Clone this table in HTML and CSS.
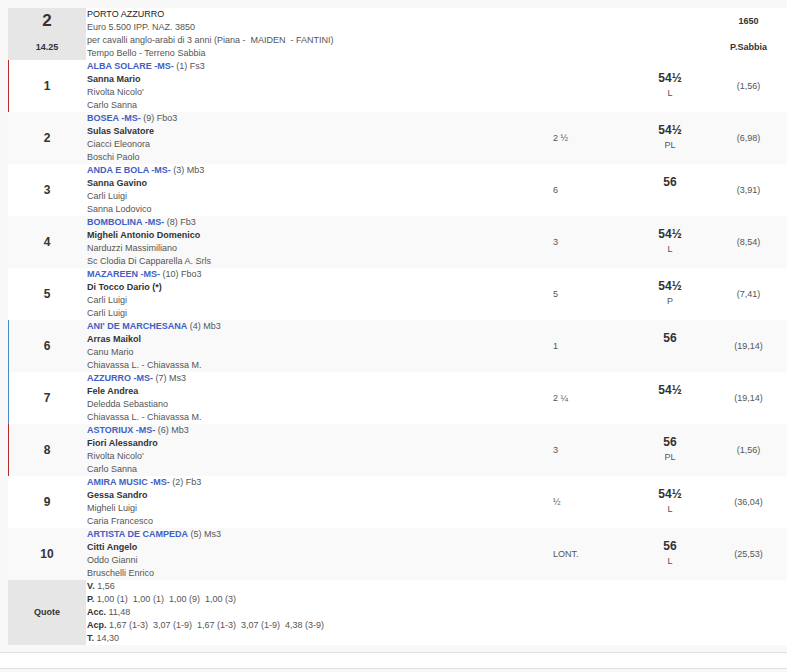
FILE: index.html
```html
<!DOCTYPE html>
<html>
<head>
<meta charset="utf-8">
<link rel="stylesheet" href="styles.css">
</head>
<body>
<div class="race">
  <div class="row head">
    <div class="num-cell gray">
      <div class="race-no">2</div>
      <div class="race-time">14.25</div>
    </div>
    <div class="info">
      <div class="title">PORTO AZZURRO</div>
      <div>Euro 5.500 IPP. NAZ. 3850</div>
      <div>per cavalli anglo-arabi di 3 anni (Piana -&nbsp; MAIDEN&nbsp; - FANTINI)</div>
      <div>Tempo Bello - Terreno Sabbia</div>
    </div>
    <div></div>
    <div></div>
    <div class="track">
      <div class="track-line">1650</div>
      <div class="track-line">P.Sabbia</div>
    </div>
  </div>

  <div class="row mark-red">
    <div class="pos">1</div>
    <div class="info"><div><span class="horse">ALBA SOLARE -MS-</span> (1) Fs3</div><div class="jockey">Sanna Mario</div><div>Rivolta Nicolo'</div><div>Carlo Sanna</div></div>
    <div class="dist"></div>
    <div class="weight"><div class="kg">54½</div><div class="wl">L</div></div>
    <div class="odds">(1,56)</div>
  </div>

  <div class="row alt">
    <div class="pos">2</div>
    <div class="info"><div><span class="horse">BOSEA -MS-</span> (9) Fbo3</div><div class="jockey">Sulas Salvatore</div><div>Ciacci Eleonora</div><div>Boschi Paolo</div></div>
    <div class="dist">2 ½</div>
    <div class="weight"><div class="kg">54½</div><div class="wl">PL</div></div>
    <div class="odds">(6,98)</div>
  </div>

  <div class="row">
    <div class="pos">3</div>
    <div class="info"><div><span class="horse">ANDA E BOLA -MS-</span> (3) Mb3</div><div class="jockey">Sanna Gavino</div><div>Carli Luigi</div><div>Sanna Lodovico</div></div>
    <div class="dist">6</div>
    <div class="weight"><div class="kg">56</div><div class="wl"></div></div>
    <div class="odds">(3,91)</div>
  </div>

  <div class="row alt">
    <div class="pos">4</div>
    <div class="info"><div><span class="horse">BOMBOLINA -MS-</span> (8) Fb3</div><div class="jockey">Migheli Antonio Domenico</div><div>Narduzzi Massimiliano</div><div>Sc Clodia Di Capparella A. Srls</div></div>
    <div class="dist">3</div>
    <div class="weight"><div class="kg">54½</div><div class="wl">L</div></div>
    <div class="odds">(8,54)</div>
  </div>

  <div class="row">
    <div class="pos">5</div>
    <div class="info"><div><span class="horse">MAZAREEN -MS-</span> (10) Fbo3</div><div class="jockey">Di Tocco Dario (*)</div><div>Carli Luigi</div><div>Carli Luigi</div></div>
    <div class="dist">5</div>
    <div class="weight"><div class="kg">54½</div><div class="wl">P</div></div>
    <div class="odds">(7,41)</div>
  </div>

  <div class="row alt mark-blue">
    <div class="pos">6</div>
    <div class="info"><div><span class="horse">ANI' DE MARCHESANA</span> (4) Mb3</div><div class="jockey">Arras Maikol</div><div>Canu Mario</div><div>Chiavassa L. - Chiavassa M.</div></div>
    <div class="dist">1</div>
    <div class="weight"><div class="kg">56</div><div class="wl"></div></div>
    <div class="odds">(19,14)</div>
  </div>

  <div class="row mark-blue">
    <div class="pos">7</div>
    <div class="info"><div><span class="horse">AZZURRO -MS-</span> (7) Ms3</div><div class="jockey">Fele Andrea</div><div>Deledda Sebastiano</div><div>Chiavassa L. - Chiavassa M.</div></div>
    <div class="dist">2 ¼</div>
    <div class="weight"><div class="kg">54½</div><div class="wl"></div></div>
    <div class="odds">(19,14)</div>
  </div>

  <div class="row alt mark-red">
    <div class="pos">8</div>
    <div class="info"><div><span class="horse">ASTORIUX -MS-</span> (6) Mb3</div><div class="jockey">Fiori Alessandro</div><div>Rivolta Nicolo'</div><div>Carlo Sanna</div></div>
    <div class="dist">3</div>
    <div class="weight"><div class="kg">56</div><div class="wl">PL</div></div>
    <div class="odds">(1,56)</div>
  </div>

  <div class="row">
    <div class="pos">9</div>
    <div class="info"><div><span class="horse">AMIRA MUSIC -MS-</span> (2) Fb3</div><div class="jockey">Gessa Sandro</div><div>Migheli Luigi</div><div>Caria Francesco</div></div>
    <div class="dist">½</div>
    <div class="weight"><div class="kg">54½</div><div class="wl">L</div></div>
    <div class="odds">(36,04)</div>
  </div>

  <div class="row alt">
    <div class="pos">10</div>
    <div class="info"><div><span class="horse">ARTISTA DE CAMPEDA</span> (5) Ms3</div><div class="jockey">Citti Angelo</div><div>Oddo Gianni</div><div>Bruschelli Enrico</div></div>
    <div class="dist">LONT.</div>
    <div class="weight"><div class="kg">56</div><div class="wl">L</div></div>
    <div class="odds">(25,53)</div>
  </div>

  <div class="row quote-row">
    <div class="quote-label gray">Quote</div>
    <div class="info">
      <div><b>V.</b> 1,56</div>
      <div><b>P.</b> 1,00 (1)&nbsp; 1,00 (1)&nbsp; 1,00 (9)&nbsp; 1,00 (3)</div>
      <div><b>Acc.</b> 11,48</div>
      <div><b>Acp.</b> 1,67 (1-3)&nbsp; 3,07 (1-9)&nbsp; 1,67 (1-3)&nbsp; 3,07 (1-9)&nbsp; 4,38 (3-9)</div>
      <div><b>T.</b> 14,30</div>
    </div>
    <div></div>
    <div></div>
    <div></div>
  </div>
</div>
<div class="spacer"></div>
<div class="footer-band"></div>
</body>
</html>
```

FILE: styles.css
```css
html, body {
  margin: 0;
  padding: 0;
}
body {
  background: #f8f8f8;
  padding: 8px 0 0 8px;
  font-family: "Liberation Sans", Arial, sans-serif;
  font-size: 9px;
  line-height: 13px;
  color: #555;
}
.race {
  background: #fff;
}
.row {
  display: grid;
  grid-template-columns: 78px 467px 77px 80px 77px;
  background: #fff;
}
.row.alt {
  background: #f9f9f9;
}
.mark-red {
  box-shadow: inset 1px 0 0 #b52a2a;
}
.mark-blue {
  box-shadow: inset 1px 0 0 #4a88cc;
}
.gray {
  background: #e6e6e6;
}
.num-cell {
  display: flex;
  flex-direction: column;
  align-items: center;
}
.race-no {
  height: 26px;
  line-height: 26px;
  font-size: 17px;
  font-weight: bold;
  color: #333;
}
.race-time {
  height: 26px;
  line-height: 26px;
  font-size: 9px;
  font-weight: bold;
  color: #333;
}
.info {
  padding-left: 1px;
  white-space: nowrap;
}
.title {
  color: #222;
}
.track {
  display: flex;
  flex-direction: column;
  align-items: center;
}
.track-line {
  height: 26px;
  line-height: 26px;
  font-weight: bold;
  color: #333;
}
.pos {
  display: flex;
  align-items: center;
  justify-content: center;
  font-size: 12px;
  font-weight: bold;
  color: #333;
}
.horse {
  color: #3f60c4;
  font-weight: bold;
}
.jockey {
  color: #333;
  font-weight: bold;
}
.dist {
  display: flex;
  align-items: center;
}
.weight {
  display: flex;
  flex-direction: column;
  justify-content: center;
  align-items: center;
}
.kg {
  height: 15px;
  line-height: 15px;
  font-size: 12px;
  font-weight: bold;
  color: #333;
}
.wl {
  height: 15px;
  line-height: 15px;
}
.odds {
  display: flex;
  align-items: center;
  justify-content: center;
}
.quote-label {
  display: flex;
  align-items: center;
  justify-content: center;
  font-weight: bold;
  color: #333;
}
.quote-row b {
  color: #333;
}
.spacer {
  height: 7px;
}
.footer-band {
  margin-left: -8px;
  height: 15px;
  background: #fff;
  border-top: 1px solid #e0e0e0;
  border-bottom: 1px solid #e0e0e0;
}
```
